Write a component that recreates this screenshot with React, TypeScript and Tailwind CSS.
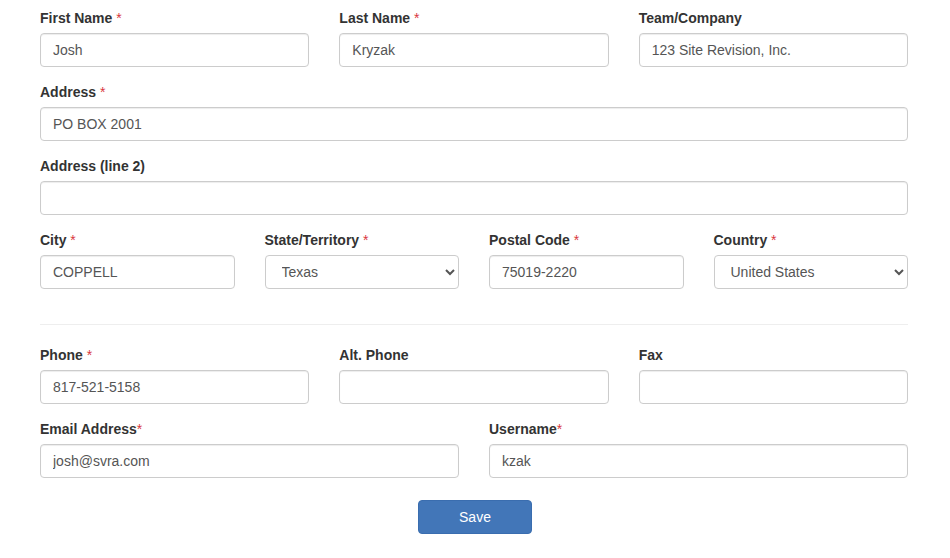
import React from "react";

const font = { fontFamily: '"Liberation Sans", Arial, sans-serif' };

function Label({ text, required, tight }: { text: string; required?: boolean; tight?: boolean }) {
    return (
        <label className="block text-[14px] leading-[20px] font-bold text-[#333] mb-[5px]">
            {text}
            {required && (
                <span className="font-normal text-[#d9363e]">{tight ? "*" : " *"}</span>
            )}
        </label>
    );
}

function Field({ label, value = "", required, tight }: { label: string; value?: string; required?: boolean; tight?: boolean }) {
    return (
        <div className="mb-[15px]">
            <Label text={label} required={required} tight={tight} />
            <input
                defaultValue={value}
                className="block w-full h-[34px] px-[12px] text-[14px] text-[#555] bg-white border border-[#ccc] rounded-[4px] shadow-[inset_0_1px_1px_rgba(0,0,0,0.075)] outline-none"
            />
        </div>
    );
}

function SelectField({ label, value }: { label: string; value: string }) {
    return (
        <div className="mb-[15px]">
            <Label text={label} required />
            <select
                defaultValue={value}
                className="block w-full h-[34px] px-[12px] text-[14px] text-[#555] bg-white border border-[#ccc] rounded-[4px] outline-none"
            >
                <option>{value}</option>
            </select>
        </div>
    );
}

export default function App() {
    return (
        <div className="w-[950px] h-[558px] bg-white overflow-hidden" style={font}>
            <div className="ml-[40px] w-[868px] pt-[8px]">
                <div className="grid grid-cols-3 gap-x-[30px]">
                    <Field label="First Name" value="Josh" required />
                    <Field label="Last Name" value="Kryzak" required />
                    <Field label="Team/Company" value="123 Site Revision, Inc." />
                </div>
                <Field label="Address" value="PO BOX 2001" required />
                <Field label="Address (line 2)" />
                <div className="grid grid-cols-4 gap-x-[30px]">
                    <Field label="City" value="COPPELL" required />
                    <SelectField label="State/Territory" value="Texas" />
                    <Field label="Postal Code" value="75019-2220" required />
                    <SelectField label="Country" value="United States" />
                </div>
                <hr className="mt-[20px] mb-[20px] border-0 border-t border-[#eee]" />
                <div className="grid grid-cols-3 gap-x-[30px]">
                    <Field label="Phone" value="817-521-5158" required />
                    <Field label="Alt. Phone" />
                    <Field label="Fax" />
                </div>
                <div className="grid grid-cols-2 gap-x-[30px]">
                    <Field label="Email Address" value="josh@svra.com" required tight />
                    <Field label="Username" value="kzak" required tight />
                </div>
                <div className="flex justify-center pl-[2px] mt-[7px]">
                    <button className="w-[114px] h-[34px] text-[14px] text-white bg-[#4276b8] border border-[#3a6daf] rounded-[4px]">
                        Save
                    </button>
                </div>
            </div>
        </div>
    );
}
